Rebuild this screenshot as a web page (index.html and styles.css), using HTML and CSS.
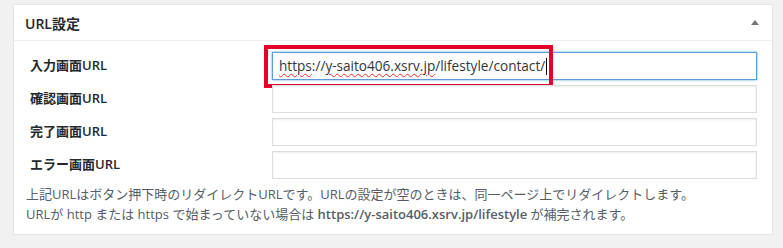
FILE: index.html
```html
<!DOCTYPE html>
<html lang="ja">
<head>
    <meta charset="UTF-8">
    <meta name="viewport" content="width=device-width, initial-scale=1.0">
    <title>URL設定</title>
    <link rel="stylesheet" href="styles.css">
</head>
<body>
    <div class="postbox">
        <div class="postbox-header">
            <h2>URL設定</h2>
            <span class="toggle-arrow"></span>
        </div>
        <div class="inside">
            <div class="form-row">
                <label>入力画面URL</label>
                <div class="field-wrap">
                    <div class="field focused"><span class="typo">https</span>://<span class="typo">y-saito406.xsrv.jp</span>/lifestyle/contact/<span class="caret"></span></div>
                    <span class="highlight"></span>
                </div>
            </div>
            <div class="form-row">
                <label for="confirmUrl">確認画面URL</label>
                <div class="field-wrap"><input type="text" id="confirmUrl" class="field"></div>
            </div>
            <div class="form-row">
                <label for="completeUrl">完了画面URL</label>
                <div class="field-wrap"><input type="text" id="completeUrl" class="field"></div>
            </div>
            <div class="form-row">
                <label for="errorUrl">エラー画面URL</label>
                <div class="field-wrap"><input type="text" id="errorUrl" class="field"></div>
            </div>
            <p class="description">
                上記URLはボタン押下時のリダイレクトURLです。URLの設定が空のときは、同一ページ上でリダイレクトします。<br>
                URLが http または https で始まっていない場合は <strong>https://y-saito406.xsrv.jp/lifestyle</strong> が補完されます。
            </p>
        </div>
    </div>
</body>
</html>
```

FILE: styles.css
```css
body {
    margin: 0;
    padding: 4px 10px 0 13px;
    background: #f1f1f1;
    font-family: "Open Sans", "Noto Sans CJK JP", sans-serif;
    font-size: 13px;
    color: #23282d;
}

.postbox {
    background: #fff;
    border: 1px solid #e5e5e5;
    box-shadow: 0 1px 1px rgba(0, 0, 0, 0.04);
}

.postbox-header {
    height: 35px;
    display: flex;
    align-items: center;
    justify-content: space-between;
    padding: 0 13px 0 11px;
    border-bottom: 1px solid #eee;
}

.postbox-header h2 {
    margin: 0;
    font-size: 14px;
    font-weight: 600;
}

.toggle-arrow {
    width: 0;
    height: 0;
    border-left: 4px solid transparent;
    border-right: 4px solid transparent;
    border-bottom: 5px solid #72777c;
}

.inside {
    padding: 11px 15px 10px 12px;
}

.form-row {
    display: flex;
    align-items: center;
    margin-bottom: 5px;
}

.form-row label {
    width: 242px;
    padding: 0 0 3px 4px;
    font-weight: 600;
}

.field-wrap {
    position: relative;
    flex: 1;
}

.field {
    display: block;
    box-sizing: border-box;
    width: 100%;
    height: 28px;
    margin: 0;
    padding: 0 6px;
    border: 1px solid #ddd;
    box-shadow: inset 0 1px 2px rgba(0, 0, 0, 0.07);
    background: #fff;
    font: inherit;
    font-size: 13.6px;
    color: #32373c;
    line-height: 26px;
    white-space: nowrap;
}

.field.focused {
    border-color: #5b9dd9;
    box-shadow: 0 0 2px rgba(30, 140, 190, 0.8);
}

.typo {
    text-decoration: underline wavy #e0302b;
    text-decoration-thickness: 1px;
    text-underline-offset: 2px;
}

.caret {
    display: inline-block;
    width: 1px;
    height: 17px;
    margin-left: 1px;
    vertical-align: -4px;
    background: #000;
}

.highlight {
    position: absolute;
    left: -8px;
    top: -7px;
    width: 289px;
    height: 43px;
    box-sizing: border-box;
    border: 4px solid #e4002b;
    pointer-events: none;
}

.description {
    margin: 4px 0 0;
    line-height: 20px;
    color: #555d66;
}

.description strong {
    font-weight: 600;
}
```
